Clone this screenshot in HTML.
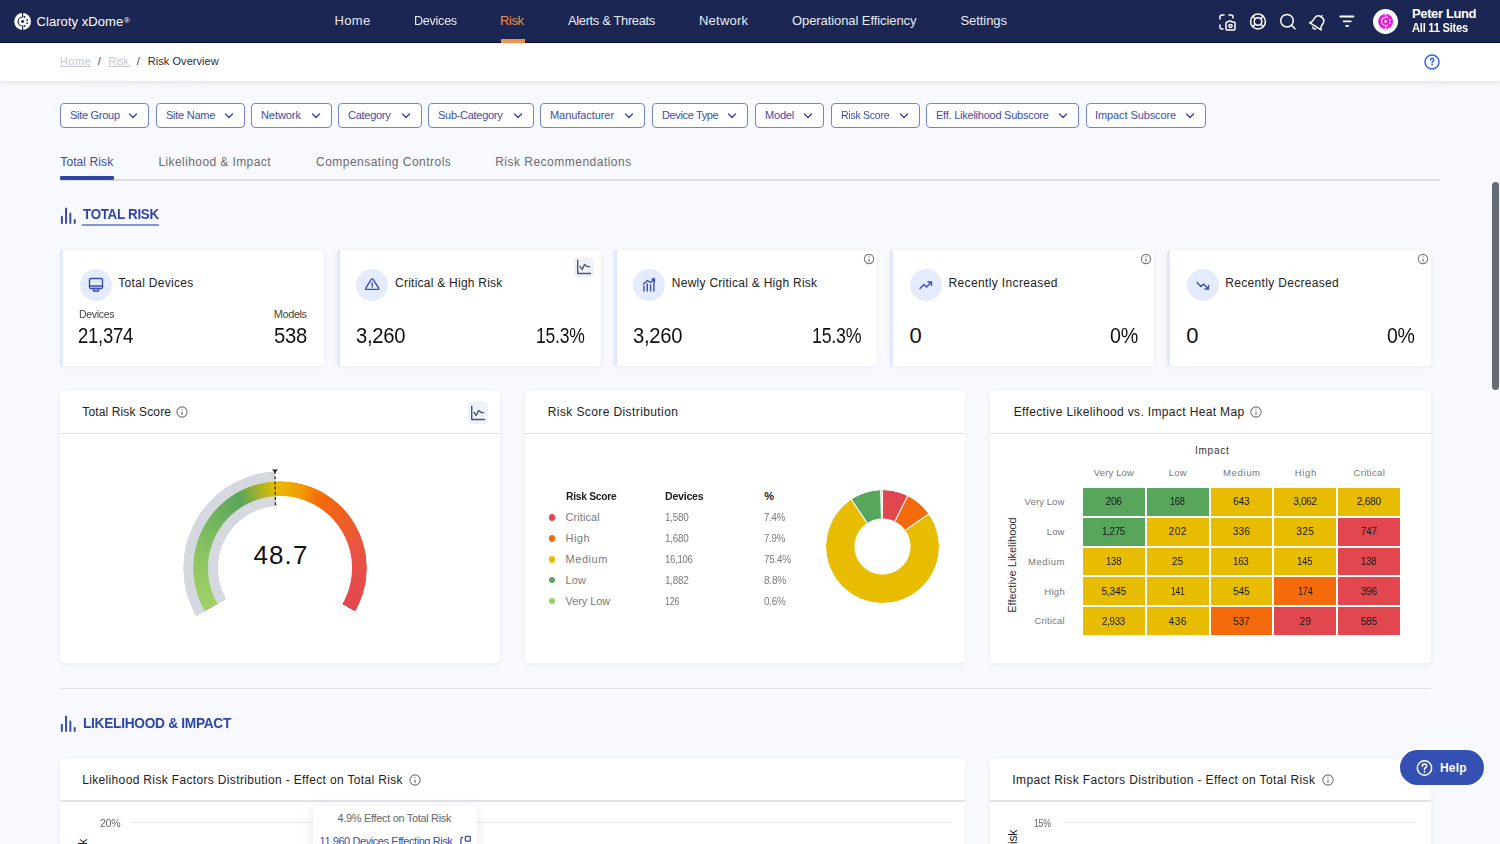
<!DOCTYPE html>
<html><head><meta charset="utf-8"><title>Risk Overview</title>
<style>
html,body{margin:0;padding:0;}
body{width:1500px;height:844px;overflow:hidden;position:relative;background:#f8f9fe;font-family:"Liberation Sans", sans-serif;}
.t{position:absolute;white-space:nowrap;font-family:"Liberation Sans", sans-serif;}
</style></head><body>
<div style="position:absolute;left:0px;top:0px;width:1500px;height:43px;background:#1b2752;"></div>
<div style="position:absolute;left:0px;top:42px;width:1500px;height:1px;background:#050d3a;"></div>
<svg style="position:absolute;left:0;top:0;overflow:visible" width="1" height="1">
<circle cx="22.6" cy="21.5" r="8.4" fill="#ffffff"/>
<path d="M22.60 12.90 L22.60 17.00 A4.50 4.50 0 0 0 22.60 26.00 L22.60 30.10" stroke="#1b2752" stroke-width="1.20" fill="none"/>
<circle cx="22.6" cy="21.5" r="1.45" fill="#1b2752"/>
<circle cx="24.51" cy="16.99" r="0.95" fill="#1b2752"/><circle cx="27.26" cy="19.99" r="0.95" fill="#1b2752"/><circle cx="27.23" cy="23.10" r="0.95" fill="#1b2752"/><circle cx="24.51" cy="26.01" r="0.95" fill="#1b2752"/>
</svg>
<div style="position:absolute;left:501px;top:39px;width:24px;height:4px;background:#F5914B;"></div>
<svg style="position:absolute;left:1217px;top:13px" width="22" height="19" viewBox="0 0 22 19">
<path d="M3 6 V4 Q3 2 5 2 H7 M12 2 H14 Q16 2 16 4 V5 M3 12 V14 Q3 16 5 16 H6" stroke="#fff" stroke-width="1.5" fill="none" stroke-linecap="round" stroke-linejoin="round"/>
<path d="M9 10 Q9 9 10 9 H11 L12 8 H14 L15 9 H17 Q18 9 18 10 V16 Q18 17 17 17 H10 Q9 17 9 16 Z" stroke="#fff" stroke-width="1.5" fill="none" stroke-linecap="round" stroke-linejoin="round"/>
<circle cx="13.5" cy="13" r="1.6" stroke="#fff" stroke-width="1.5" fill="none" stroke-linecap="round" stroke-linejoin="round"/>
</svg>
<svg style="position:absolute;left:1248px;top:12px" width="20" height="20" viewBox="0 0 20 20">
<circle cx="10" cy="9.5" r="7.4" stroke="#fff" stroke-width="1.5" fill="none" stroke-linecap="round" stroke-linejoin="round"/><circle cx="10" cy="9.5" r="3.8" stroke="#fff" stroke-width="1.5" fill="none" stroke-linecap="round" stroke-linejoin="round"/>
<path d="M4.8 4.3 L7.3 6.8 M15.2 4.3 L12.7 6.8 M4.8 14.7 L7.3 12.2 M15.2 14.7 L12.7 12.2" stroke="#fff" stroke-width="1.5" fill="none" stroke-linecap="round" stroke-linejoin="round"/>
</svg>
<svg style="position:absolute;left:1278px;top:12px" width="20" height="20" viewBox="0 0 20 20">
<circle cx="9" cy="8.7" r="6.3" stroke="#fff" stroke-width="1.5" fill="none" stroke-linecap="round" stroke-linejoin="round"/><path d="M13.6 13.4 L17 16.8" stroke="#fff" stroke-width="1.5" fill="none" stroke-linecap="round" stroke-linejoin="round"/>
</svg>
<svg style="position:absolute;left:1307px;top:11px" width="22" height="22" viewBox="0 0 22 22">
<g transform="rotate(32 11 11)">
<path d="M4.2 16 H17.8 Q16 14.5 16 12 V9.5 Q16 5 11 5 Q6 5 6 9.5 V12 Q6 14.5 4.2 16 Z" stroke="#fff" stroke-width="1.5" fill="none" stroke-linecap="round" stroke-linejoin="round"/>
<path d="M11 5 V3.6" stroke="#fff" stroke-width="1.5" fill="none" stroke-linecap="round" stroke-linejoin="round"/><path d="M9.3 18.2 Q11 19.6 12.7 18.2" stroke="#fff" stroke-width="1.5" fill="none" stroke-linecap="round" stroke-linejoin="round"/>
</g>
</svg>
<svg style="position:absolute;left:1338px;top:14px" width="18" height="14" viewBox="0 0 18 14">
<path d="M2.2 2.5 H15.4 M5.6 7.3 H12.8 M8.2 11.9 H10.1" stroke="#fff" stroke-width="1.8" stroke-linecap="round"/>
</svg>
<div style="position:absolute;left:1372.8px;top:8.6px;width:25.4px;height:25.4px;background:#fff;border-radius:50%;"></div>
<svg style="position:absolute;left:0;top:0;overflow:visible" width="1" height="1">
<circle cx="1385.6" cy="21.4" r="7.5" fill="#e21fcf"/>
<path d="M1385.60 13.72 L1385.60 17.38 A4.02 4.02 0 0 0 1385.60 25.42 L1385.60 29.08" stroke="#ffffff" stroke-width="1.07" fill="none"/>
<circle cx="1385.6" cy="21.4" r="1.29" fill="#ffffff"/>
<circle cx="1387.31" cy="17.37" r="0.85" fill="#ffffff"/><circle cx="1389.76" cy="20.05" r="0.85" fill="#ffffff"/><circle cx="1389.74" cy="22.82" r="0.85" fill="#ffffff"/><circle cx="1387.31" cy="25.43" r="0.85" fill="#ffffff"/>
</svg>
<div style="position:absolute;left:0px;top:43px;width:1500px;height:38px;background:#fff;box-shadow:0 2px 5px rgba(40,50,90,0.10);"></div>
<div style="position:absolute;left:60px;top:66px;width:31px;height:1px;background:#c3c8d1;"></div>
<div style="position:absolute;left:108px;top:66px;width:22px;height:1px;background:#c3c8d1;"></div>
<svg style="position:absolute;left:1423px;top:53px" width="18" height="18" viewBox="0 0 18 18">
<circle cx="9" cy="9" r="7" stroke="#3d63dd" stroke-width="1.5" fill="none"/>
<path d="M7.6 7.0 Q7.6 5.3 9.1 5.3 Q10.7 5.3 10.7 6.8 Q10.7 7.8 9.8 8.3 Q9.1 8.7 9.1 9.7" stroke="#3d63dd" stroke-width="1.5" fill="none" stroke-linecap="round"/>
<circle cx="9.1" cy="11.6" r="0.9" fill="#3d63dd"/>
</svg>
<div style="position:absolute;left:60px;top:103px;width:89px;height:25px;box-sizing:border-box;border:1px solid #7485cf;border-radius:4px;background:#fff;"></div>
<svg style="position:absolute;left:128px;top:112px" width="10" height="8" viewBox="0 0 10 8"><path d="M1.5 2 L5 5.5 L8.5 2" stroke="#3b4ea6" stroke-width="1.5" fill="none" stroke-linecap="round" stroke-linejoin="round"/></svg>
<div style="position:absolute;left:156px;top:103px;width:89px;height:25px;box-sizing:border-box;border:1px solid #7485cf;border-radius:4px;background:#fff;"></div>
<svg style="position:absolute;left:224px;top:112px" width="10" height="8" viewBox="0 0 10 8"><path d="M1.5 2 L5 5.5 L8.5 2" stroke="#3b4ea6" stroke-width="1.5" fill="none" stroke-linecap="round" stroke-linejoin="round"/></svg>
<div style="position:absolute;left:251px;top:103px;width:81px;height:25px;box-sizing:border-box;border:1px solid #7485cf;border-radius:4px;background:#fff;"></div>
<svg style="position:absolute;left:311px;top:112px" width="10" height="8" viewBox="0 0 10 8"><path d="M1.5 2 L5 5.5 L8.5 2" stroke="#3b4ea6" stroke-width="1.5" fill="none" stroke-linecap="round" stroke-linejoin="round"/></svg>
<div style="position:absolute;left:338px;top:103px;width:84px;height:25px;box-sizing:border-box;border:1px solid #7485cf;border-radius:4px;background:#fff;"></div>
<svg style="position:absolute;left:401px;top:112px" width="10" height="8" viewBox="0 0 10 8"><path d="M1.5 2 L5 5.5 L8.5 2" stroke="#3b4ea6" stroke-width="1.5" fill="none" stroke-linecap="round" stroke-linejoin="round"/></svg>
<div style="position:absolute;left:428px;top:103px;width:106px;height:25px;box-sizing:border-box;border:1px solid #7485cf;border-radius:4px;background:#fff;"></div>
<svg style="position:absolute;left:513px;top:112px" width="10" height="8" viewBox="0 0 10 8"><path d="M1.5 2 L5 5.5 L8.5 2" stroke="#3b4ea6" stroke-width="1.5" fill="none" stroke-linecap="round" stroke-linejoin="round"/></svg>
<div style="position:absolute;left:540px;top:103px;width:105px;height:25px;box-sizing:border-box;border:1px solid #7485cf;border-radius:4px;background:#fff;"></div>
<svg style="position:absolute;left:624px;top:112px" width="10" height="8" viewBox="0 0 10 8"><path d="M1.5 2 L5 5.5 L8.5 2" stroke="#3b4ea6" stroke-width="1.5" fill="none" stroke-linecap="round" stroke-linejoin="round"/></svg>
<div style="position:absolute;left:652px;top:103px;width:96px;height:25px;box-sizing:border-box;border:1px solid #7485cf;border-radius:4px;background:#fff;"></div>
<svg style="position:absolute;left:727px;top:112px" width="10" height="8" viewBox="0 0 10 8"><path d="M1.5 2 L5 5.5 L8.5 2" stroke="#3b4ea6" stroke-width="1.5" fill="none" stroke-linecap="round" stroke-linejoin="round"/></svg>
<div style="position:absolute;left:755px;top:103px;width:69px;height:25px;box-sizing:border-box;border:1px solid #7485cf;border-radius:4px;background:#fff;"></div>
<svg style="position:absolute;left:803px;top:112px" width="10" height="8" viewBox="0 0 10 8"><path d="M1.5 2 L5 5.5 L8.5 2" stroke="#3b4ea6" stroke-width="1.5" fill="none" stroke-linecap="round" stroke-linejoin="round"/></svg>
<div style="position:absolute;left:831px;top:103px;width:89px;height:25px;box-sizing:border-box;border:1px solid #7485cf;border-radius:4px;background:#fff;"></div>
<svg style="position:absolute;left:899px;top:112px" width="10" height="8" viewBox="0 0 10 8"><path d="M1.5 2 L5 5.5 L8.5 2" stroke="#3b4ea6" stroke-width="1.5" fill="none" stroke-linecap="round" stroke-linejoin="round"/></svg>
<div style="position:absolute;left:926px;top:103px;width:153px;height:25px;box-sizing:border-box;border:1px solid #7485cf;border-radius:4px;background:#fff;"></div>
<svg style="position:absolute;left:1058px;top:112px" width="10" height="8" viewBox="0 0 10 8"><path d="M1.5 2 L5 5.5 L8.5 2" stroke="#3b4ea6" stroke-width="1.5" fill="none" stroke-linecap="round" stroke-linejoin="round"/></svg>
<div style="position:absolute;left:1086px;top:103px;width:120px;height:25px;box-sizing:border-box;border:1px solid #7485cf;border-radius:4px;background:#fff;"></div>
<svg style="position:absolute;left:1185px;top:112px" width="10" height="8" viewBox="0 0 10 8"><path d="M1.5 2 L5 5.5 L8.5 2" stroke="#3b4ea6" stroke-width="1.5" fill="none" stroke-linecap="round" stroke-linejoin="round"/></svg>
<div style="position:absolute;left:60px;top:179px;width:1380px;height:2px;background:#dcdee3;"></div>
<div style="position:absolute;left:60px;top:176px;width:54px;height:3.5px;background:#2f45a8;border-radius:1px;"></div>
<svg style="position:absolute;left:60px;top:206.2px" width="18" height="18" viewBox="0 0 18 18">
<path d="M1.9 17 V10.8 M6.05 17 V2.5 M10.35 17 V7.6 M14.7 17 V14.1" stroke="#3b4ea6" stroke-width="2" stroke-linecap="round"/>
</svg>
<div style="position:absolute;left:82px;top:224px;width:77px;height:2px;background:#8796d8;"></div>
<div style="position:absolute;left:60.0px;top:250px;width:263.75px;height:116px;box-sizing:border-box;background:#fff;border-left:3px solid #e2e8fc;border-radius:3px;box-shadow:0 1px 4px rgba(60,70,120,0.08);"></div>
<div style="position:absolute;left:79.5px;top:268.5px;width:32px;height:32px;background:#e4ebfc;border-radius:50%;"></div>
<div style="position:absolute;left:336.75px;top:250px;width:263.75px;height:116px;box-sizing:border-box;background:#fff;border-left:3px solid #e2e8fc;border-radius:3px;box-shadow:0 1px 4px rgba(60,70,120,0.08);"></div>
<div style="position:absolute;left:356.25px;top:268.5px;width:32px;height:32px;background:#e4ebfc;border-radius:50%;"></div>
<div style="position:absolute;left:613.5px;top:250px;width:263.75px;height:116px;box-sizing:border-box;background:#fff;border-left:3px solid #e2e8fc;border-radius:3px;box-shadow:0 1px 4px rgba(60,70,120,0.08);"></div>
<div style="position:absolute;left:633.0px;top:268.5px;width:32px;height:32px;background:#e4ebfc;border-radius:50%;"></div>
<div style="position:absolute;left:890.25px;top:250px;width:263.75px;height:116px;box-sizing:border-box;background:#fff;border-left:3px solid #e2e8fc;border-radius:3px;box-shadow:0 1px 4px rgba(60,70,120,0.08);"></div>
<div style="position:absolute;left:909.75px;top:268.5px;width:32px;height:32px;background:#e4ebfc;border-radius:50%;"></div>
<div style="position:absolute;left:1167.0px;top:250px;width:263.75px;height:116px;box-sizing:border-box;background:#fff;border-left:3px solid #e2e8fc;border-radius:3px;box-shadow:0 1px 4px rgba(60,70,120,0.08);"></div>
<div style="position:absolute;left:1186.5px;top:268.5px;width:32px;height:32px;background:#e4ebfc;border-radius:50%;"></div>
<svg style="position:absolute;left:86.7px;top:275.8px" width="18" height="18" viewBox="0 0 18 18">
<rect x="2.5" y="2.5" width="13" height="10" rx="1.5" stroke="#3a4fb2" stroke-width="1.4" fill="none" stroke-linecap="round" stroke-linejoin="round"/><path d="M2.5 10 H15.5" stroke="#3a4fb2" stroke-width="1.4" fill="none" stroke-linecap="round" stroke-linejoin="round"/><rect x="6.5" y="12.5" width="5" height="2.5" stroke="#3a4fb2" stroke-width="1.4" fill="none" stroke-linecap="round" stroke-linejoin="round"/>
</svg>
<svg style="position:absolute;left:363.45px;top:275.8px" width="18" height="18" viewBox="0 0 18 18">
<path d="M8.1 3.6 Q9.2 2.2 10.3 3.6 L15.6 12.2 Q16.2 13.4 14.9 13.4 H3.5 Q2.2 13.4 2.8 12.2 Z" stroke="#3a4fb2" stroke-width="1.4" fill="none" stroke-linecap="round" stroke-linejoin="round"/><path d="M9.2 6.9 V9.7" stroke="#3a4fb2" stroke-width="1.4" fill="none" stroke-linecap="round" stroke-linejoin="round"/><circle cx="9.2" cy="11.3" r="0.75" fill="#3a4fb2"/>
</svg>
<svg style="position:absolute;left:640.2px;top:275.8px" width="18" height="18" viewBox="0 0 18 18">
<path d="M4 15 V10 M7.3 15 V8 M10.6 15 V9 M13.9 15 V6" stroke="#3a4fb2" stroke-width="1.4" fill="none" stroke-linecap="round" stroke-linejoin="round"/><path d="M3.5 8 L7.5 4.5 L10.5 6.5 L14.5 3 M12 3 H14.5 V5.5" stroke="#3a4fb2" stroke-width="1.4" fill="none" stroke-linecap="round" stroke-linejoin="round"/>
</svg>
<svg style="position:absolute;left:916.95px;top:275.8px" width="18" height="18" viewBox="0 0 18 18">
<path d="M3 12.5 L7 8.5 L9.5 11 L14.5 6 M11 6 H14.5 V9.5" stroke="#3a4fb2" stroke-width="1.4" fill="none" stroke-linecap="round" stroke-linejoin="round" stroke-width="1.6"/>
</svg>
<svg style="position:absolute;left:1193.7px;top:275.8px" width="18" height="18" viewBox="0 0 18 18">
<path d="M3 6.5 L7 10.5 L9.5 8 L14.5 13 M11 13 H14.5 V9.5" stroke="#3a4fb2" stroke-width="1.4" fill="none" stroke-linecap="round" stroke-linejoin="round" stroke-width="1.6"/>
</svg>
<div style="position:absolute;left:574.1px;top:256.8px;width:20px;height:20px;background:#eef2fc;border-radius:4px;"></div>
<svg style="position:absolute;left:574.1px;top:256.8px" width="20" height="20" viewBox="0 0 20 20">
<path d="M3.7 3.3 V16.5 H16.6" stroke="#50565e" stroke-width="1.4" fill="none" stroke-linecap="round" stroke-linejoin="round"/>
<path d="M6 9.4 L8.2 12.4 L10.6 7.5 L13.2 9.4 Q14.3 9.7 15.7 9.6" stroke="#50565e" stroke-width="1.4" fill="none" stroke-linecap="round" stroke-linejoin="round"/>
</svg>
<svg style="position:absolute;left:861.3px;top:251.2px" width="16" height="16" viewBox="0 0 16 16">
<circle cx="8" cy="8" r="4.6" stroke="#72777e" stroke-width="1.1" fill="none"/><path d="M8 8.23 V10.25" stroke="#72777e" stroke-width="1.2" stroke-linecap="round"/><circle cx="8" cy="5.88" r="0.65" fill="#72777e"/>
</svg>
<svg style="position:absolute;left:1138.0px;top:251.2px" width="16" height="16" viewBox="0 0 16 16">
<circle cx="8" cy="8" r="4.6" stroke="#72777e" stroke-width="1.1" fill="none"/><path d="M8 8.23 V10.25" stroke="#72777e" stroke-width="1.2" stroke-linecap="round"/><circle cx="8" cy="5.88" r="0.65" fill="#72777e"/>
</svg>
<svg style="position:absolute;left:1414.8px;top:251.2px" width="16" height="16" viewBox="0 0 16 16">
<circle cx="8" cy="8" r="4.6" stroke="#72777e" stroke-width="1.1" fill="none"/><path d="M8 8.23 V10.25" stroke="#72777e" stroke-width="1.2" stroke-linecap="round"/><circle cx="8" cy="5.88" r="0.65" fill="#72777e"/>
</svg>
<div style="position:absolute;left:60px;top:391px;width:440px;height:272px;background:#fff;border-radius:4px;box-shadow:0 1px 4px rgba(60,70,120,0.08);"></div>
<div style="position:absolute;left:60px;top:433px;width:440px;height:1px;background:#e2e4e8;"></div>
<div style="position:absolute;left:525px;top:391px;width:440px;height:272px;background:#fff;border-radius:4px;box-shadow:0 1px 4px rgba(60,70,120,0.08);"></div>
<div style="position:absolute;left:525px;top:433px;width:440px;height:1px;background:#e2e4e8;"></div>
<div style="position:absolute;left:990px;top:391px;width:441px;height:272px;background:#fff;border-radius:4px;box-shadow:0 1px 4px rgba(60,70,120,0.08);"></div>
<div style="position:absolute;left:990px;top:433px;width:441px;height:1px;background:#e2e4e8;"></div>
<svg style="position:absolute;left:174.4px;top:404.2px" width="16" height="16" viewBox="0 0 16 16">
<circle cx="8" cy="8" r="5.1" stroke="#72777e" stroke-width="1.1" fill="none"/><path d="M8 8.25 V10.50" stroke="#72777e" stroke-width="1.2" stroke-linecap="round"/><circle cx="8" cy="5.65" r="0.65" fill="#72777e"/>
</svg>
<div style="position:absolute;left:467.7px;top:401.2px;width:20px;height:22.6px;background:#eef2fc;border-radius:4px;"></div>
<svg style="position:absolute;left:467.7px;top:402.5px" width="20" height="20" viewBox="0 0 20 20">
<path d="M3.7 3.3 V16.5 H16.6" stroke="#50565e" stroke-width="1.4" fill="none" stroke-linecap="round" stroke-linejoin="round"/>
<path d="M6 9.4 L8.2 12.4 L10.6 7.5 L13.2 9.4 Q14.3 9.7 15.7 9.6" stroke="#50565e" stroke-width="1.4" fill="none" stroke-linecap="round" stroke-linejoin="round"/>
</svg>
<svg style="position:absolute;left:1248.1px;top:404.2px" width="16" height="16" viewBox="0 0 16 16">
<circle cx="8" cy="8" r="5.1" stroke="#72777e" stroke-width="1.1" fill="none"/><path d="M8 8.25 V10.50" stroke="#72777e" stroke-width="1.2" stroke-linecap="round"/><circle cx="8" cy="5.65" r="0.65" fill="#72777e"/>
</svg>
<div style="position:absolute;left:183px;top:471px;width:194px;height:194px;border-radius:50%;background:conic-gradient(from 240deg, #d5d9df 0deg, #d5d9df 116.88deg, transparent 116.88deg);-webkit-mask:radial-gradient(circle closest-side, transparent 61.5px, #000 62.5px, #000 96.4px, transparent 97.4px);mask:radial-gradient(circle closest-side, transparent 61.5px, #000 62.5px, #000 96.4px, transparent 97.4px);"></div>
<div style="position:absolute;left:193px;top:481px;width:174px;height:174px;border-radius:50%;background:conic-gradient(from 240deg, #a2d06a 0deg, #8cc460 40deg, #5aa55c 90deg, #e7bc00 117deg, #f39a06 135deg, #f56a0b 150deg, #ea5440 195deg, #e2474f 240deg, transparent 240deg);-webkit-mask:radial-gradient(circle closest-side, transparent 71.5px, #000 72.5px, #000 86.4px, transparent 87.4px);mask:radial-gradient(circle closest-side, transparent 71.5px, #000 72.5px, #000 86.4px, transparent 87.4px);"></div>
<svg style="position:absolute;left:268.72px;top:466px" width="12" height="44" viewBox="0 0 12 44">
<path d="M6 5 L6.4 40" stroke="#222" stroke-width="1.2" stroke-dasharray="3 2.2"/><path d="M3 3.5 H9 L6 6.8 Z" fill="#222"/>
</svg>
<div style="position:absolute;left:548.7px;top:514.0px;width:6.8px;height:6.8px;background:#e2474f;border-radius:50%;"></div>
<div style="position:absolute;left:548.7px;top:534.9px;width:6.8px;height:6.8px;background:#f56a0b;border-radius:50%;"></div>
<div style="position:absolute;left:548.7px;top:555.8px;width:6.8px;height:6.8px;background:#e8bc00;border-radius:50%;"></div>
<div style="position:absolute;left:548.7px;top:576.7px;width:6.8px;height:6.8px;background:#58a55c;border-radius:50%;"></div>
<div style="position:absolute;left:548.7px;top:597.6px;width:6.8px;height:6.8px;background:#9bcf63;border-radius:50%;"></div>
<div style="position:absolute;left:825.8px;top:489.69999999999993px;width:113.2px;height:113.2px;border-radius:50%;background:conic-gradient(#e2474f 0.00deg 26.64deg,#f56a0b 26.64deg 55.08deg,#e8bc00 55.08deg 326.52deg,#58a55c 326.52deg 358.20deg,#9bcf63 358.20deg 360.00deg);-webkit-mask:radial-gradient(circle closest-side, transparent 27.5px, #000 28.5px, #000 56.0px, transparent 57.0px);mask:radial-gradient(circle closest-side, transparent 27.5px, #000 28.5px, #000 56.0px, transparent 57.0px);"></div>
<svg style="position:absolute;left:0;top:0" width="1500" height="844"><path d="M882.40 518.30 L882.40 488.70" stroke="#fff" stroke-width="1.2"/><path d="M894.95 521.27 L908.23 494.81" stroke="#fff" stroke-width="1.2"/><path d="M905.36 530.27 L929.63 513.33" stroke="#fff" stroke-width="1.2"/><path d="M866.95 522.95 L850.63 498.26" stroke="#fff" stroke-width="1.2"/><path d="M881.52 518.31 L880.59 488.73" stroke="#fff" stroke-width="1.2"/></svg>
<div style="position:absolute;left:1083.0px;top:488.0px;width:61.8px;height:27.8px;background:#58a55c;"></div>
<div style="position:absolute;left:1146.8px;top:488.0px;width:61.8px;height:27.8px;background:#58a55c;"></div>
<div style="position:absolute;left:1210.6px;top:488.0px;width:61.8px;height:27.8px;background:#e8bc00;"></div>
<div style="position:absolute;left:1274.4px;top:488.0px;width:61.8px;height:27.8px;background:#e8bc00;"></div>
<div style="position:absolute;left:1338.2px;top:488.0px;width:61.8px;height:27.8px;background:#e8bc00;"></div>
<div style="position:absolute;left:1083.0px;top:517.8px;width:61.8px;height:27.8px;background:#58a55c;"></div>
<div style="position:absolute;left:1146.8px;top:517.8px;width:61.8px;height:27.8px;background:#e8bc00;"></div>
<div style="position:absolute;left:1210.6px;top:517.8px;width:61.8px;height:27.8px;background:#e8bc00;"></div>
<div style="position:absolute;left:1274.4px;top:517.8px;width:61.8px;height:27.8px;background:#e8bc00;"></div>
<div style="position:absolute;left:1338.2px;top:517.8px;width:61.8px;height:27.8px;background:#e2474f;"></div>
<div style="position:absolute;left:1083.0px;top:547.6px;width:61.8px;height:27.8px;background:#e8bc00;"></div>
<div style="position:absolute;left:1146.8px;top:547.6px;width:61.8px;height:27.8px;background:#e8bc00;"></div>
<div style="position:absolute;left:1210.6px;top:547.6px;width:61.8px;height:27.8px;background:#e8bc00;"></div>
<div style="position:absolute;left:1274.4px;top:547.6px;width:61.8px;height:27.8px;background:#e8bc00;"></div>
<div style="position:absolute;left:1338.2px;top:547.6px;width:61.8px;height:27.8px;background:#e2474f;"></div>
<div style="position:absolute;left:1083.0px;top:577.4px;width:61.8px;height:27.8px;background:#e8bc00;"></div>
<div style="position:absolute;left:1146.8px;top:577.4px;width:61.8px;height:27.8px;background:#e8bc00;"></div>
<div style="position:absolute;left:1210.6px;top:577.4px;width:61.8px;height:27.8px;background:#e8bc00;"></div>
<div style="position:absolute;left:1274.4px;top:577.4px;width:61.8px;height:27.8px;background:#f56a0b;"></div>
<div style="position:absolute;left:1338.2px;top:577.4px;width:61.8px;height:27.8px;background:#e2474f;"></div>
<div style="position:absolute;left:1083.0px;top:607.2px;width:61.8px;height:27.8px;background:#e8bc00;"></div>
<div style="position:absolute;left:1146.8px;top:607.2px;width:61.8px;height:27.8px;background:#e8bc00;"></div>
<div style="position:absolute;left:1210.6px;top:607.2px;width:61.8px;height:27.8px;background:#f56a0b;"></div>
<div style="position:absolute;left:1274.4px;top:607.2px;width:61.8px;height:27.8px;background:#e2474f;"></div>
<div style="position:absolute;left:1338.2px;top:607.2px;width:61.8px;height:27.8px;background:#e2474f;"></div>
<div class="t" style="left:1012.2px;top:565px;font-size:11px;line-height:11px;color:#333;transform:translate(-50%,-50%) rotate(-90deg);white-space:nowrap;letter-spacing:0.05px">Effective Likelihood</div>
<div style="position:absolute;left:60px;top:688px;width:1371px;height:1px;background:#dfe2e8;"></div>
<svg style="position:absolute;left:60px;top:713.9px" width="18" height="18" viewBox="0 0 18 18">
<path d="M1.9 17 V10.8 M6.05 17 V2.5 M10.35 17 V7.6 M14.7 17 V14.1" stroke="#3b4ea6" stroke-width="2" stroke-linecap="round"/>
</svg>
<div style="position:absolute;left:60px;top:758.5px;width:905px;height:141.5px;background:#fff;border-radius:4px;box-shadow:0 1px 4px rgba(60,70,120,0.08);"></div>
<div style="position:absolute;left:60px;top:800px;width:905px;height:2px;background:#e2e4e8;"></div>
<div style="position:absolute;left:990px;top:758.5px;width:441px;height:141.5px;background:#fff;border-radius:4px;box-shadow:0 1px 4px rgba(60,70,120,0.08);"></div>
<div style="position:absolute;left:990px;top:800px;width:441px;height:2px;background:#e2e4e8;"></div>
<svg style="position:absolute;left:407.2px;top:771.6px" width="16" height="16" viewBox="0 0 16 16">
<circle cx="8" cy="8" r="5.1" stroke="#72777e" stroke-width="1.1" fill="none"/><path d="M8 8.25 V10.50" stroke="#72777e" stroke-width="1.2" stroke-linecap="round"/><circle cx="8" cy="5.65" r="0.65" fill="#72777e"/>
</svg>
<svg style="position:absolute;left:1320px;top:771.6px" width="16" height="16" viewBox="0 0 16 16">
<circle cx="8" cy="8" r="5.1" stroke="#72777e" stroke-width="1.1" fill="none"/><path d="M8 8.25 V10.50" stroke="#72777e" stroke-width="1.2" stroke-linecap="round"/><circle cx="8" cy="5.65" r="0.65" fill="#72777e"/>
</svg>
<div style="position:absolute;left:132px;top:821.5px;width:819px;height:1px;background:#e8e9ec;"></div>
<div style="position:absolute;left:1063px;top:821.5px;width:353px;height:1px;background:#e8e9ec;"></div>
<div class="t" style="left:76.5px;top:838.9px;font-size:12px;line-height:12px;color:#222;letter-spacing:-0.2px;transform-origin:0 0;transform:rotate(-90deg) translateX(-100%);white-space:nowrap">Effect on Total Risk</div>
<div class="t" style="left:1006.8px;top:829.8px;font-size:12px;line-height:12px;color:#222;letter-spacing:-0.2px;transform-origin:0 0;transform:rotate(-90deg) translateX(-100%);white-space:nowrap">Effect on Total Risk</div>
<div style="position:absolute;left:313px;top:806px;width:164px;height:60px;background:#fff;border-radius:4px;box-shadow:0 2px 14px rgba(30,40,80,0.11);"></div>
<div style="position:absolute;left:319px;top:846.5px;width:134px;height:1px;background:#3b4ea6;"></div>
<svg style="position:absolute;left:459px;top:833px" width="13" height="13" viewBox="0 0 13 13">
<rect x="6.4" y="3.4" width="4.8" height="4.8" rx="0.4" stroke="#3b4ea6" stroke-width="1.3" fill="none"/><path d="M1.9 13 V6.2 Q1.9 4.4 3.6 4.2" stroke="#3b4ea6" stroke-width="1.3" fill="none" stroke-linecap="round"/>
</svg>
<div style="position:absolute;left:1400.3px;top:750.1px;width:83.5px;height:35.4px;background:#3550b3;border-radius:18px;box-shadow:0 0 0 1.6px #fff, 0 0 3px 1px rgba(255,255,255,0.6);"></div>
<svg style="position:absolute;left:1415px;top:759px" width="19" height="19" viewBox="0 0 19 19">
<circle cx="9.5" cy="9" r="7.2" stroke="#fff" stroke-width="1.5" fill="none"/>
<path d="M7.4 7.2 Q7.4 5.1 9.5 5.1 Q11.6 5.1 11.6 7 Q11.6 8.3 10.1 9 Q9.5 9.3 9.5 10.5" stroke="#fff" stroke-width="1.5" fill="none" stroke-linecap="round"/>
<circle cx="9.5" cy="12.8" r="0.95" fill="#fff"/>
</svg>
<div style="position:absolute;left:1491.5px;top:182px;width:7.5px;height:207.5px;background:#656c75;border-radius:4px;"></div>
<div class="t" style="left:36.50px;top:15.20px;font-size:13px;line-height:13px;color:#ffffff;letter-spacing:0.064px;">Claroty xDome</div>
<div class="t" style="left:124.00px;top:16.50px;font-size:8px;line-height:8px;color:#ffffff;">®</div>
<div class="t" style="left:334.60px;top:13.80px;font-size:13px;line-height:13px;color:#e8eaf1;letter-spacing:0.318px;">Home</div>
<div class="t" style="left:413.53px;top:13.80px;font-size:13px;line-height:13px;color:#e8eaf1;letter-spacing:-0.300px;transform:scaleX(0.9719);transform-origin:0 0;">Devices</div>
<div class="t" style="left:500.00px;top:13.80px;font-size:13px;line-height:13px;color:#EF8D4C;letter-spacing:-0.425px;">Risk</div>
<div class="t" style="left:568.00px;top:13.80px;font-size:13px;line-height:13px;color:#e8eaf1;letter-spacing:-0.380px;">Alerts &amp; Threats</div>
<div class="t" style="left:699.00px;top:13.80px;font-size:13px;line-height:13px;color:#e8eaf1;letter-spacing:0.220px;">Network</div>
<div class="t" style="left:792.00px;top:13.80px;font-size:13px;line-height:13px;color:#e8eaf1;letter-spacing:-0.082px;">Operational Efficiency</div>
<div class="t" style="left:960.50px;top:13.80px;font-size:13px;line-height:13px;color:#e8eaf1;letter-spacing:-0.068px;">Settings</div>
<div class="t" style="left:1412.00px;top:7.40px;font-size:13px;line-height:13px;color:#ffffff;font-weight:700;letter-spacing:-0.373px;">Peter Lund</div>
<div class="t" style="left:1412.00px;top:21.20px;font-size:13px;line-height:13px;color:#ffffff;font-weight:700;letter-spacing:-0.300px;transform:scaleX(0.8600);transform-origin:0 0;">All 11 Sites</div>
<div class="t" style="left:59.80px;top:56.30px;font-size:11px;line-height:11px;color:#c3c8d1;letter-spacing:0.558px;">Home</div>
<div class="t" style="left:97.70px;top:56.30px;font-size:11px;line-height:11px;color:#444;">/</div>
<div class="t" style="left:108.30px;top:56.30px;font-size:11px;line-height:11px;color:#c3c8d1;letter-spacing:-0.296px;">Risk</div>
<div class="t" style="left:136.70px;top:56.30px;font-size:11px;line-height:11px;color:#444;">/</div>
<div class="t" style="left:147.70px;top:56.30px;font-size:11px;line-height:11px;color:#2b2b2b;letter-spacing:0.063px;">Risk Overview</div>
<div class="t" style="left:70.00px;top:110.40px;font-size:11px;line-height:11px;color:#3b4ea6;letter-spacing:-0.285px;">Site Group</div>
<div class="t" style="left:166.00px;top:110.40px;font-size:11px;line-height:11px;color:#3b4ea6;letter-spacing:-0.254px;">Site Name</div>
<div class="t" style="left:261.00px;top:110.40px;font-size:11px;line-height:11px;color:#3b4ea6;letter-spacing:-0.074px;">Network</div>
<div class="t" style="left:348.00px;top:110.40px;font-size:11px;line-height:11px;color:#3b4ea6;letter-spacing:-0.276px;">Category</div>
<div class="t" style="left:438.00px;top:110.40px;font-size:11px;line-height:11px;color:#3b4ea6;letter-spacing:-0.288px;">Sub-Category</div>
<div class="t" style="left:550.00px;top:110.40px;font-size:11px;line-height:11px;color:#3b4ea6;letter-spacing:-0.068px;">Manufacturer</div>
<div class="t" style="left:662.00px;top:110.40px;font-size:11px;line-height:11px;color:#3b4ea6;letter-spacing:-0.361px;">Device Type</div>
<div class="t" style="left:765.00px;top:110.40px;font-size:11px;line-height:11px;color:#3b4ea6;letter-spacing:-0.179px;">Model</div>
<div class="t" style="left:841.00px;top:110.40px;font-size:11px;line-height:11px;color:#3b4ea6;letter-spacing:-0.300px;transform:scaleX(0.9611);transform-origin:0 0;">Risk Score</div>
<div class="t" style="left:936.00px;top:110.40px;font-size:11px;line-height:11px;color:#3b4ea6;letter-spacing:-0.240px;">Eff. Likelihood Subscore</div>
<div class="t" style="left:1095.00px;top:110.40px;font-size:11px;line-height:11px;color:#3b4ea6;letter-spacing:-0.094px;">Impact Subscore</div>
<div class="t" style="left:60.30px;top:155.60px;font-size:12px;line-height:12px;color:#3b4ea6;letter-spacing:0.098px;">Total Risk</div>
<div class="t" style="left:158.40px;top:155.60px;font-size:12px;line-height:12px;color:#6b6b6b;letter-spacing:0.412px;">Likelihood &amp; Impact</div>
<div class="t" style="left:316.00px;top:155.60px;font-size:12px;line-height:12px;color:#6b6b6b;letter-spacing:0.470px;">Compensating Controls</div>
<div class="t" style="left:495.20px;top:155.60px;font-size:12px;line-height:12px;color:#6b6b6b;letter-spacing:0.489px;">Risk Recommendations</div>
<div class="t" style="left:82.80px;top:207.40px;font-size:14px;line-height:14px;color:#2f45a8;font-weight:700;letter-spacing:-0.300px;transform:scaleX(0.9538);transform-origin:0 0;">TOTAL RISK</div>
<div class="t" style="left:118.30px;top:277.00px;font-size:12px;line-height:12px;color:#222;letter-spacing:0.303px;">Total Devices</div>
<div class="t" style="left:395.05px;top:277.00px;font-size:12px;line-height:12px;color:#222;letter-spacing:0.243px;">Critical &amp; High Risk</div>
<div class="t" style="left:671.80px;top:277.00px;font-size:12px;line-height:12px;color:#222;letter-spacing:0.264px;">Newly Critical &amp; High Risk</div>
<div class="t" style="left:948.55px;top:277.00px;font-size:12px;line-height:12px;color:#222;letter-spacing:0.362px;">Recently Increased</div>
<div class="t" style="left:1225.30px;top:277.00px;font-size:12px;line-height:12px;color:#222;letter-spacing:0.319px;">Recently Decreased</div>
<div class="t" style="left:79.30px;top:309.30px;font-size:11px;line-height:11px;color:#444;letter-spacing:-0.300px;transform:scaleX(0.9518);transform-origin:0 0;">Devices</div>
<div class="t" style="left:273.80px;top:309.30px;font-size:11px;line-height:11px;color:#444;letter-spacing:-0.432px;">Models</div>
<div class="t" style="left:78.36px;top:324.60px;font-size:22px;line-height:22px;color:#111;letter-spacing:-0.300px;transform:scaleX(0.8412);transform-origin:0 0;">21,374</div>
<div class="t" style="left:274.30px;top:324.60px;font-size:22px;line-height:22px;color:#111;letter-spacing:-0.300px;transform:scaleX(0.9200);transform-origin:0 0;">538</div>
<div class="t" style="left:355.95px;top:324.60px;font-size:22px;line-height:22px;color:#111;letter-spacing:-0.300px;transform:scaleX(0.9213);transform-origin:0 0;">3,260</div>
<div class="t" style="left:535.75px;top:324.60px;font-size:22px;line-height:22px;color:#111;letter-spacing:-0.300px;transform:scaleX(0.7967);transform-origin:0 0;">15.3%</div>
<div class="t" style="left:632.70px;top:324.60px;font-size:22px;line-height:22px;color:#111;letter-spacing:-0.300px;transform:scaleX(0.9213);transform-origin:0 0;">3,260</div>
<div class="t" style="left:811.79px;top:324.60px;font-size:22px;line-height:22px;color:#111;letter-spacing:-0.300px;transform:scaleX(0.8085);transform-origin:0 0;">15.3%</div>
<div class="t" style="left:909.45px;top:324.60px;font-size:22px;line-height:22px;color:#111;">0</div>
<div class="t" style="left:1109.85px;top:324.60px;font-size:22px;line-height:22px;color:#111;letter-spacing:-0.300px;transform:scaleX(0.8954);transform-origin:0 0;">0%</div>
<div class="t" style="left:1186.20px;top:324.60px;font-size:22px;line-height:22px;color:#111;">0</div>
<div class="t" style="left:1386.80px;top:324.60px;font-size:22px;line-height:22px;color:#111;letter-spacing:-0.300px;transform:scaleX(0.8890);transform-origin:0 0;">0%</div>
<div class="t" style="left:82.30px;top:406.00px;font-size:12px;line-height:12px;color:#222;letter-spacing:0.132px;">Total Risk Score</div>
<div class="t" style="left:547.80px;top:406.00px;font-size:12px;line-height:12px;color:#222;letter-spacing:0.396px;">Risk Score Distribution</div>
<div class="t" style="left:1013.70px;top:406.00px;font-size:12px;line-height:12px;color:#222;letter-spacing:0.357px;">Effective Likelihood vs. Impact Heat Map</div>
<div class="t" style="left:253.50px;top:541.70px;font-size:26px;line-height:26px;color:#111;letter-spacing:1.085px;">48.7</div>
<div class="t" style="left:565.60px;top:491.30px;font-size:11px;line-height:11px;color:#222;font-weight:700;letter-spacing:-0.300px;transform:scaleX(0.9381);transform-origin:0 0;">Risk Score</div>
<div class="t" style="left:664.70px;top:491.30px;font-size:11px;line-height:11px;color:#222;font-weight:700;letter-spacing:-0.300px;transform:scaleX(0.9705);transform-origin:0 0;">Devices</div>
<div class="t" style="left:764.30px;top:491.30px;font-size:11px;line-height:11px;color:#222;font-weight:700;">%</div>
<div class="t" style="left:565.60px;top:512.00px;font-size:11px;line-height:11px;color:#7a7a7a;letter-spacing:0.076px;">Critical</div>
<div class="t" style="left:665.10px;top:512.00px;font-size:11px;line-height:11px;color:#7a7a7a;letter-spacing:-0.300px;transform:scaleX(0.9004);transform-origin:0 0;">1,580</div>
<div class="t" style="left:764.40px;top:512.00px;font-size:11px;line-height:11px;color:#7a7a7a;letter-spacing:-0.300px;transform:scaleX(0.8774);transform-origin:0 0;">7.4%</div>
<div class="t" style="left:565.60px;top:532.90px;font-size:11px;line-height:11px;color:#7a7a7a;letter-spacing:0.432px;">High</div>
<div class="t" style="left:665.10px;top:532.90px;font-size:11px;line-height:11px;color:#7a7a7a;letter-spacing:-0.300px;transform:scaleX(0.9004);transform-origin:0 0;">1,680</div>
<div class="t" style="left:764.40px;top:532.90px;font-size:11px;line-height:11px;color:#7a7a7a;letter-spacing:-0.300px;transform:scaleX(0.8774);transform-origin:0 0;">7.9%</div>
<div class="t" style="left:565.60px;top:553.80px;font-size:11px;line-height:11px;color:#7a7a7a;letter-spacing:0.528px;">Medium</div>
<div class="t" style="left:665.10px;top:553.80px;font-size:11px;line-height:11px;color:#7a7a7a;letter-spacing:-0.300px;transform:scaleX(0.8680);transform-origin:0 0;">16,106</div>
<div class="t" style="left:764.40px;top:553.80px;font-size:11px;line-height:11px;color:#7a7a7a;letter-spacing:-0.300px;transform:scaleX(0.9004);transform-origin:0 0;">75.4%</div>
<div class="t" style="left:565.60px;top:574.70px;font-size:11px;line-height:11px;color:#7a7a7a;letter-spacing:0.032px;">Low</div>
<div class="t" style="left:665.10px;top:574.70px;font-size:11px;line-height:11px;color:#7a7a7a;letter-spacing:-0.300px;transform:scaleX(0.9004);transform-origin:0 0;">1,882</div>
<div class="t" style="left:764.40px;top:574.70px;font-size:11px;line-height:11px;color:#7a7a7a;letter-spacing:-0.300px;transform:scaleX(0.9225);transform-origin:0 0;">8.8%</div>
<div class="t" style="left:565.60px;top:595.60px;font-size:11px;line-height:11px;color:#7a7a7a;letter-spacing:-0.100px;">Very Low</div>
<div class="t" style="left:665.10px;top:595.60px;font-size:11px;line-height:11px;color:#7a7a7a;letter-spacing:-0.300px;transform:scaleX(0.8165);transform-origin:0 0;">126</div>
<div class="t" style="left:764.40px;top:595.60px;font-size:11px;line-height:11px;color:#7a7a7a;letter-spacing:-0.300px;transform:scaleX(0.9020);transform-origin:0 0;">0.6%</div>
<div class="t" style="left:1195.00px;top:445.60px;font-size:10px;line-height:10px;color:#333;letter-spacing:0.754px;">Impact</div>
<div class="t" style="left:1093.80px;top:468.40px;font-size:9.5px;line-height:9.5px;color:#777;letter-spacing:0.141px;">Very Low</div>
<div class="t" style="left:1168.75px;top:468.40px;font-size:9.5px;line-height:9.5px;color:#777;letter-spacing:0.167px;">Low</div>
<div class="t" style="left:1222.90px;top:468.40px;font-size:9.5px;line-height:9.5px;color:#777;letter-spacing:0.665px;">Medium</div>
<div class="t" style="left:1294.65px;top:468.40px;font-size:9.5px;line-height:9.5px;color:#777;letter-spacing:0.682px;">High</div>
<div class="t" style="left:1353.55px;top:468.40px;font-size:9.5px;line-height:9.5px;color:#777;letter-spacing:0.312px;">Critical</div>
<div class="t" style="left:1024.60px;top:497.20px;font-size:9.5px;line-height:9.5px;color:#777;letter-spacing:0.098px;">Very Low</div>
<div class="t" style="left:1105.45px;top:497.30px;font-size:10px;line-height:10px;color:#1a1a1a;letter-spacing:-0.112px;">206</div>
<div class="t" style="left:1170.10px;top:497.30px;font-size:10px;line-height:10px;color:#1a1a1a;letter-spacing:-0.300px;transform:scaleX(0.9199);transform-origin:0 0;">168</div>
<div class="t" style="left:1233.05px;top:497.30px;font-size:10px;line-height:10px;color:#1a1a1a;letter-spacing:-0.112px;">643</div>
<div class="t" style="left:1293.30px;top:497.30px;font-size:10px;line-height:10px;color:#1a1a1a;letter-spacing:-0.366px;">3,062</div>
<div class="t" style="left:1356.75px;top:497.30px;font-size:10px;line-height:10px;color:#1a1a1a;letter-spacing:-0.191px;">2,680</div>
<div class="t" style="left:1046.80px;top:527.00px;font-size:9.5px;line-height:9.5px;color:#777;letter-spacing:0.067px;">Low</div>
<div class="t" style="left:1102.10px;top:527.10px;font-size:10px;line-height:10px;color:#1a1a1a;letter-spacing:-0.300px;transform:scaleX(0.9727);transform-origin:0 0;">1,275</div>
<div class="t" style="left:1168.60px;top:527.10px;font-size:10px;line-height:10px;color:#1a1a1a;letter-spacing:0.538px;">202</div>
<div class="t" style="left:1232.70px;top:527.10px;font-size:10px;line-height:10px;color:#1a1a1a;letter-spacing:0.238px;">336</div>
<div class="t" style="left:1296.35px;top:527.10px;font-size:10px;line-height:10px;color:#1a1a1a;letter-spacing:0.388px;">325</div>
<div class="t" style="left:1360.65px;top:527.10px;font-size:10px;line-height:10px;color:#1a1a1a;letter-spacing:-0.112px;">747</div>
<div class="t" style="left:1028.10px;top:556.80px;font-size:9.5px;line-height:9.5px;color:#777;letter-spacing:0.505px;">Medium</div>
<div class="t" style="left:1105.95px;top:556.90px;font-size:10px;line-height:10px;color:#1a1a1a;letter-spacing:-0.300px;transform:scaleX(0.9623);transform-origin:0 0;">138</div>
<div class="t" style="left:1171.80px;top:556.90px;font-size:10px;line-height:10px;color:#1a1a1a;letter-spacing:0.238px;">25</div>
<div class="t" style="left:1233.40px;top:556.90px;font-size:10px;line-height:10px;color:#1a1a1a;letter-spacing:-0.300px;transform:scaleX(0.9804);transform-origin:0 0;">163</div>
<div class="t" style="left:1297.35px;top:556.90px;font-size:10px;line-height:10px;color:#1a1a1a;letter-spacing:-0.300px;transform:scaleX(0.9623);transform-origin:0 0;">145</div>
<div class="t" style="left:1361.00px;top:556.90px;font-size:10px;line-height:10px;color:#1a1a1a;letter-spacing:-0.300px;transform:scaleX(0.9804);transform-origin:0 0;">138</div>
<div class="t" style="left:1044.20px;top:586.60px;font-size:9.5px;line-height:9.5px;color:#777;letter-spacing:0.348px;">High</div>
<div class="t" style="left:1101.40px;top:586.70px;font-size:10px;line-height:10px;color:#1a1a1a;letter-spacing:-0.116px;">5,345</div>
<div class="t" style="left:1170.60px;top:586.70px;font-size:10px;line-height:10px;color:#1a1a1a;letter-spacing:-0.300px;transform:scaleX(0.8594);transform-origin:0 0;">141</div>
<div class="t" style="left:1233.05px;top:586.70px;font-size:10px;line-height:10px;color:#1a1a1a;letter-spacing:-0.112px;">545</div>
<div class="t" style="left:1297.70px;top:586.70px;font-size:10px;line-height:10px;color:#1a1a1a;letter-spacing:-0.300px;transform:scaleX(0.9199);transform-origin:0 0;">174</div>
<div class="t" style="left:1360.65px;top:586.70px;font-size:10px;line-height:10px;color:#1a1a1a;letter-spacing:-0.112px;">396</div>
<div class="t" style="left:1034.50px;top:616.40px;font-size:9.5px;line-height:9.5px;color:#777;letter-spacing:0.155px;">Critical</div>
<div class="t" style="left:1102.10px;top:616.50px;font-size:10px;line-height:10px;color:#1a1a1a;letter-spacing:-0.300px;transform:scaleX(0.9727);transform-origin:0 0;">2,933</div>
<div class="t" style="left:1168.60px;top:616.50px;font-size:10px;line-height:10px;color:#1a1a1a;letter-spacing:0.538px;">436</div>
<div class="t" style="left:1233.05px;top:616.50px;font-size:10px;line-height:10px;color:#1a1a1a;letter-spacing:-0.112px;">537</div>
<div class="t" style="left:1299.40px;top:616.50px;font-size:10px;line-height:10px;color:#1a1a1a;letter-spacing:0.238px;">29</div>
<div class="t" style="left:1360.65px;top:616.50px;font-size:10px;line-height:10px;color:#1a1a1a;letter-spacing:-0.112px;">585</div>
<div class="t" style="left:83.20px;top:715.60px;font-size:14px;line-height:14px;color:#2f45a8;font-weight:700;letter-spacing:-0.300px;transform:scaleX(0.9796);transform-origin:0 0;">LIKELIHOOD &amp; IMPACT</div>
<div class="t" style="left:82.20px;top:774.20px;font-size:12px;line-height:12px;color:#222;letter-spacing:0.345px;">Likelihood Risk Factors Distribution - Effect on Total Risk</div>
<div class="t" style="left:1012.30px;top:774.20px;font-size:12px;line-height:12px;color:#222;letter-spacing:0.377px;">Impact Risk Factors Distribution - Effect on Total Risk</div>
<div class="t" style="left:100.10px;top:818.10px;font-size:11px;line-height:11px;color:#666;letter-spacing:-0.300px;transform:scaleX(0.9568);transform-origin:0 0;">20%</div>
<div class="t" style="left:1034.00px;top:818.60px;font-size:10px;line-height:10px;color:#666;letter-spacing:-0.300px;transform:scaleX(0.8759);transform-origin:0 0;">15%</div>
<div class="t" style="left:337.50px;top:813.20px;font-size:11px;line-height:11px;color:#666;letter-spacing:-0.328px;">4.9% Effect on Total Risk</div>
<div class="t" style="left:319.50px;top:836.00px;font-size:11px;line-height:11px;color:#3b4ea6;letter-spacing:-0.422px;">11,960 Devices Effecting Risk</div>
<div class="t" style="left:1439.90px;top:762.30px;font-size:12px;line-height:12px;color:#ffffff;font-weight:700;letter-spacing:0.209px;">Help</div>
</body></html>
